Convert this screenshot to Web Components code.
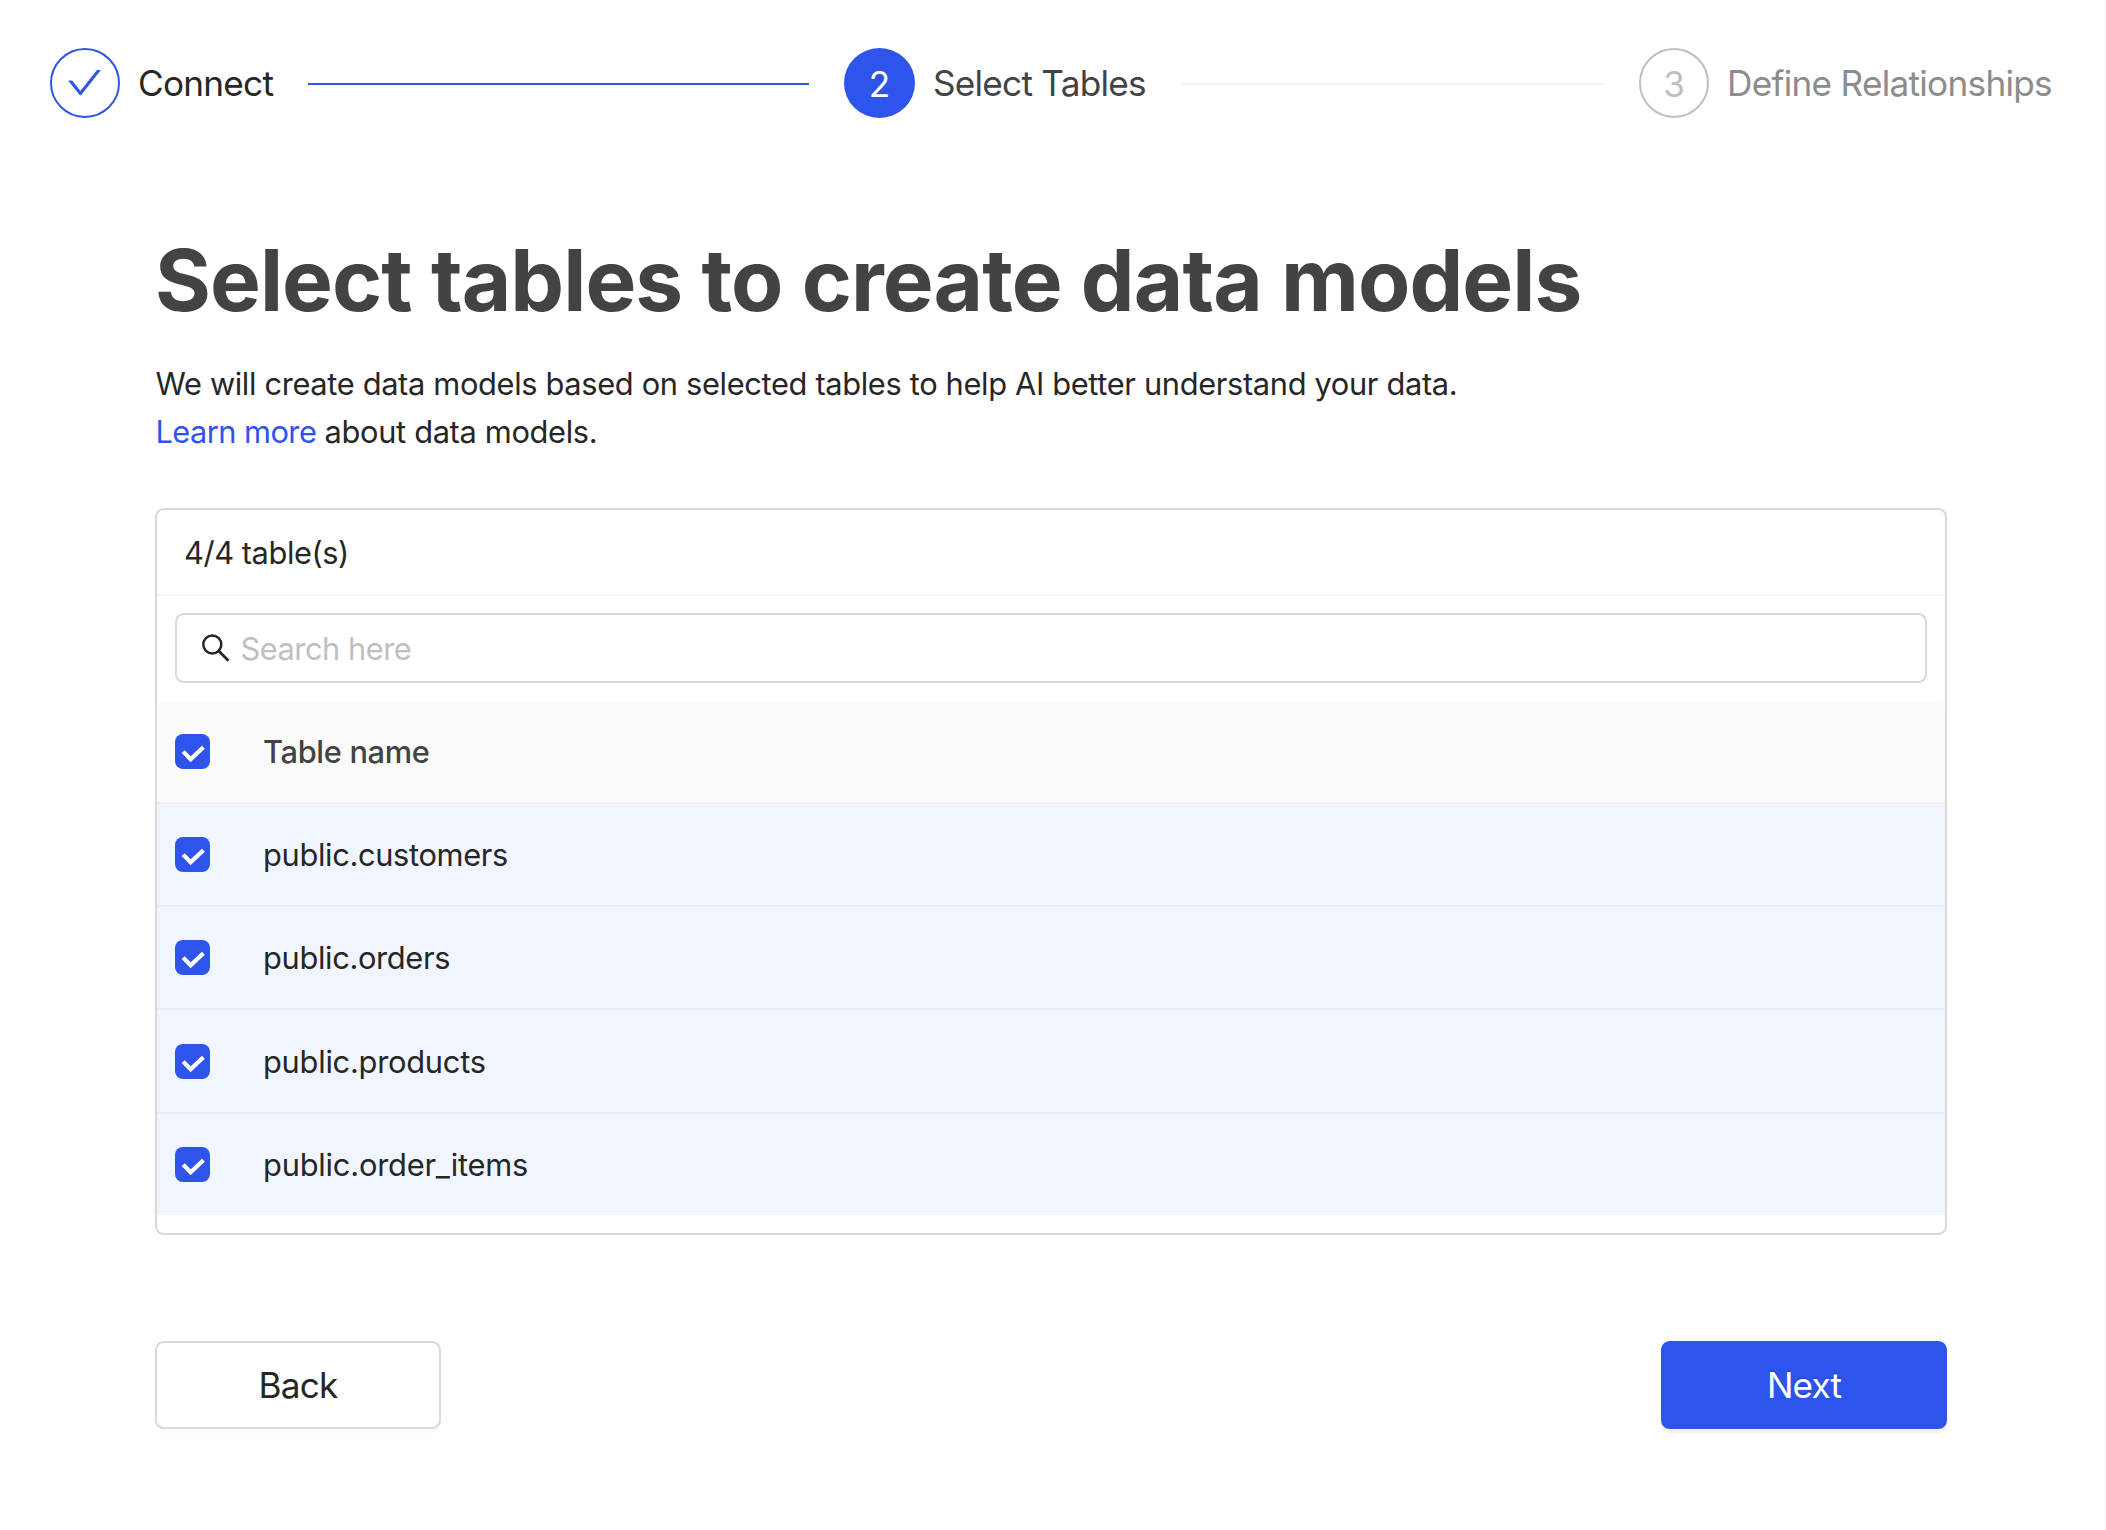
<!DOCTYPE html>
<html lang="en">
<head>
<meta charset="utf-8">
<title>Select tables</title>
<style>
html, body { margin: 0; height: 100%; }
body { font-family: Inter, "Liberation Sans", sans-serif; font-size: 30.8px; line-height: 48.4px; letter-spacing: -.34px; color: #262626; background: #fff; }
</style>
</head>
<body>
<setup-page></setup-page>
<script>
const define = (name, html) => customElements.define(name, class extends HTMLElement {
  constructor() {
    super();
    const t = document.createElement('template');
    t.innerHTML = html;
    this.attachShadow({ mode: 'open' }).append(t.content.cloneNode(true));
  }
});

define('step-item', `<style>
:host { box-sizing: border-box; display: flex; align-items: center; flex: none; width: 794px; font-size: 35.2px; line-height: 70px; letter-spacing: -.76px; }
:host([state=process]) { width: 795px; }
:host([state=wait]) { width: 413px; letter-spacing: -.73px; }
.dot { box-sizing: border-box; width: 70px; height: 70px; flex: none; border: 2px solid #2f54eb; border-radius: 50%; display: flex; align-items: center; justify-content: center; margin-right: 18px; color: #fff; background: #2f54eb; }
:host([state=process]) .dot { width: 71px; }
.num { letter-spacing: 0; padding-top: 1px; }
.dot svg { display: none; width: 35.2px; height: 35.2px; fill: #2f54eb; }
.title { white-space: nowrap; color: #434343; }
.line { flex: 1; height: 2px; background: #f0f0f0; margin: 2px 35px 0 35px; }
:host([state=finish]) .dot { background: #fff; }
:host([state=finish]) .dot svg { display: block; }
:host([state=finish]) .num, :host([state=wait]) .line { display: none; }
:host([state=finish]) .title { color: #262626; }
:host([state=finish]) .line { background: #2f54eb; }
:host([state=wait]) .dot { background: #fff; border-color: #bfbfbf; color: #bfbfbf; }
:host([state=wait]) .title { color: #8c8c8c; }
</style>
<div class="dot"><span class="num"><slot name="num"></slot></span><svg viewBox="64 64 896 896"><path d="M912 190h-69.9c-9.8 0-19.1 4.5-25.1 12.2L404.7 724.5 207 474a32 32 0 00-25.1-12.2H112c-6.7 0-10.4 7.7-6.3 12.9l273.9 347c12.8 16.2 37.4 16.2 50.3 0l488.4-618.9c4.1-5.1.4-12.8-6.3-12.8z"/></svg></div>
<div class="title"><slot></slot></div><div class="line"></div>`);

define('check-box', `<style>
:host { display: block; width: 35px; height: 35px; border-radius: 8px; background: #2f54eb; }
svg { display: block; }
</style><svg width="35" height="35" viewBox="0 0 35 35" fill="none" stroke="#fff" stroke-width="4.2"><path d="M8.2 17.6l7.4 7.7 12.8-12.1"/></svg>`);

define('table-row', `<style>
:host { box-sizing: border-box; display: flex; align-items: center; height: 103px; padding-left: 18px; gap: 53px; background: #f0f5ff; border-bottom: 2px solid #e8edf8; }
:host([head]) { background: #fafafa; border-color: #f0f0f0; border-radius: 8.8px 8.8px 0 0; font-weight: 500; color: #434343; }
:host([tall]) { height: 104px; }
:host([last]) { border: 0; height: 101px; letter-spacing: -.2px; }
span { padding-top: 2px; }
:host([head]) span { padding-top: 1px; }
</style><check-box></check-box><span><slot></slot></span>`);

define('search-field', `<style>
:host { box-sizing: border-box; display: flex; align-items: center; height: 70px; margin: 17px 18px 18px; border: 2px solid #d9d9d9; border-radius: 8.8px; padding-left: 25px; gap: 10.5px; color: #bfbfbf; letter-spacing: -.48px; }
svg { display: block; flex: none; }
span { padding-top: 2px; }
</style><svg width="28" height="28" viewBox="0 0 28 28" fill="none" stroke="#262626" stroke-width="2.5"><circle cx="10.3" cy="10.6" r="9"/><path d="M16.8 17.1L26.5 26.8" stroke-width="2.8"/></svg><span><slot></slot></span>`);

define('table-transfer', `<style>
:host { box-sizing: border-box; display: block; height: 727px; border: 2px solid #d9d9d9; border-radius: 8.8px; }
.head { height: 84px; line-height: 86px; padding-left: 27px; border-bottom: 2px solid #f5f5f5; letter-spacing: -.43px; }
</style>
<div class="head"><span>4/4 table(s)</span></div>
<search-field>Search here</search-field>
<table-row head>Table name</table-row>
<table-row>public.customers</table-row>
<table-row>public.orders</table-row>
<table-row tall style="letter-spacing:-.25px">public.products</table-row>
<table-row last>public.order_items</table-row>`);

define('push-button', `<style>
:host { box-sizing: border-box; display: block; width: 286px; height: 88px; line-height: 84px; text-align: center; font-size: 35.2px; letter-spacing: -.75px; border: 2px solid #d9d9d9; border-radius: 8.8px; box-shadow: 0 4.4px 0 rgba(0,0,0,.016); background: #fff; }
:host([primary]) { color: #fff; background: #2f54eb; border-color: #2f54eb; text-shadow: 0 -2px 0 rgba(0,0,0,.12); box-shadow: 0 4.4px 0 rgba(0,0,0,.045); letter-spacing: -.9px; }
</style><slot></slot>`);

define('setup-page', `<style>
:host { box-sizing: border-box; display: block; width: 100%; height: 1530px; border-right: 1px solid #f0f0f0; padding-top: 48px; overflow: hidden; }
nav { display: flex; padding: 0 53px 0 50px; }
main { width: 1792px; margin-left: 155px; }
h1 { margin: 111px 0 28px; font-size: 85.4px; line-height: 103px; font-weight: 700; color: #434343; white-space: nowrap; letter-spacing: -.94px; }
p { margin: 0 0 51.2px .5px; white-space: nowrap; }
a { color: #2f54eb; letter-spacing: -.56px; }
footer { display: flex; justify-content: space-between; margin-top: 106px; }
</style>
<nav><step-item state="finish">Connect</step-item><step-item state="process"><span slot="num">2</span>Select Tables</step-item><step-item state="wait"><span slot="num">3</span>Define Relationships</step-item></nav>
<main>
<h1>Select tables to create data models</h1>
<p>We will create data models based on selected tables to help AI better understand your data.<br><a>Learn more</a> about data models.</p>
<table-transfer></table-transfer>
<footer><push-button>Back</push-button><push-button primary>Next</push-button></footer>
</main>`);
</script>
</body>
</html>
